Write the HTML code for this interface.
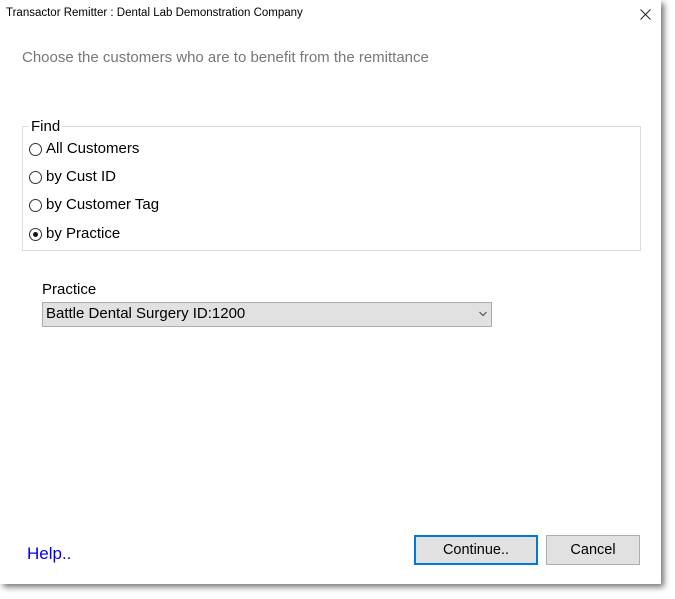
<!DOCTYPE html>
<html><head><style>
body{margin:0;width:675px;height:599px;background:#fff;position:relative;overflow:hidden;font-family:"Liberation Sans",sans-serif;}
.win{position:absolute;left:0;top:0;width:661px;height:584px;background:#fff;box-shadow:3px 3px 6px rgba(0,0,0,.55);}
.t{position:absolute;white-space:nowrap;}
.radio{position:absolute;width:11px;height:11px;border:1px solid #333;border-radius:50%;background:#fff;}
.btn{position:absolute;background:#e1e1e1;border:1px solid #adadad;box-sizing:border-box;font-size:14.5px;text-align:center;color:#000;}
</style></head><body>
<div class="win">
<div class="t" style="left:6px;top:7px;font-size:11.5px;color:#000;">Transactor Remitter : Dental Lab Demonstration Company</div>
<svg style="position:absolute;left:640px;top:9px" width="11" height="11"><path d="M0.5 0.5 L10.5 10.5 M10.5 0.5 L0.5 10.5" stroke="#222" stroke-width="1"/></svg>
<div class="t" style="left:22px;top:49px;font-size:15px;color:#777;">Choose the customers who are to benefit from the remittance</div>
<div style="position:absolute;left:22px;top:126px;width:617px;height:123px;border:1px solid #dcdcdc;"></div>
<div class="t" style="left:29px;top:118px;font-size:15px;background:#fff;padding:0 2px;color:#000;">Find</div>
<div class="radio" style="left:29px;top:143px;"></div>
<div class="t" style="left:46px;top:140px;font-size:15px;">All Customers</div>
<div class="radio" style="left:29px;top:171px;"></div>
<div class="t" style="left:46px;top:168px;font-size:15px;">by Cust ID</div>
<div class="radio" style="left:29px;top:199px;"></div>
<div class="t" style="left:46px;top:196px;font-size:15px;">by Customer Tag</div>
<div class="radio" style="left:29px;top:228px;"><div style="position:absolute;left:3px;top:3px;width:5px;height:5px;border-radius:50%;background:#111;"></div></div>
<div class="t" style="left:46px;top:225px;font-size:15px;">by Practice</div>
<div class="t" style="left:42px;top:281px;font-size:15px;">Practice</div>
<div style="position:absolute;left:42px;top:302px;width:450px;height:25px;background:#e1e1e1;border:1px solid #adadad;box-sizing:border-box;"></div>
<div class="t" style="left:46px;top:305px;font-size:15px;">Battle Dental Surgery ID:1200</div>
<svg style="position:absolute;left:479px;top:311px" width="8" height="6"><path d="M0.5 1 L4 4.5 L7.5 1" fill="none" stroke="#555" stroke-width="1.2"/></svg>
<div class="t" style="left:27px;top:544px;font-size:17px;color:#0000ee;">Help..</div>
<div class="btn" style="left:414px;top:535px;width:124px;height:30px;border:2px solid #0078d7;line-height:26px;">Continue..</div>
<div class="btn" style="left:546px;top:535px;width:94px;height:30px;line-height:28px;">Cancel</div>
</div>
</body></html>
